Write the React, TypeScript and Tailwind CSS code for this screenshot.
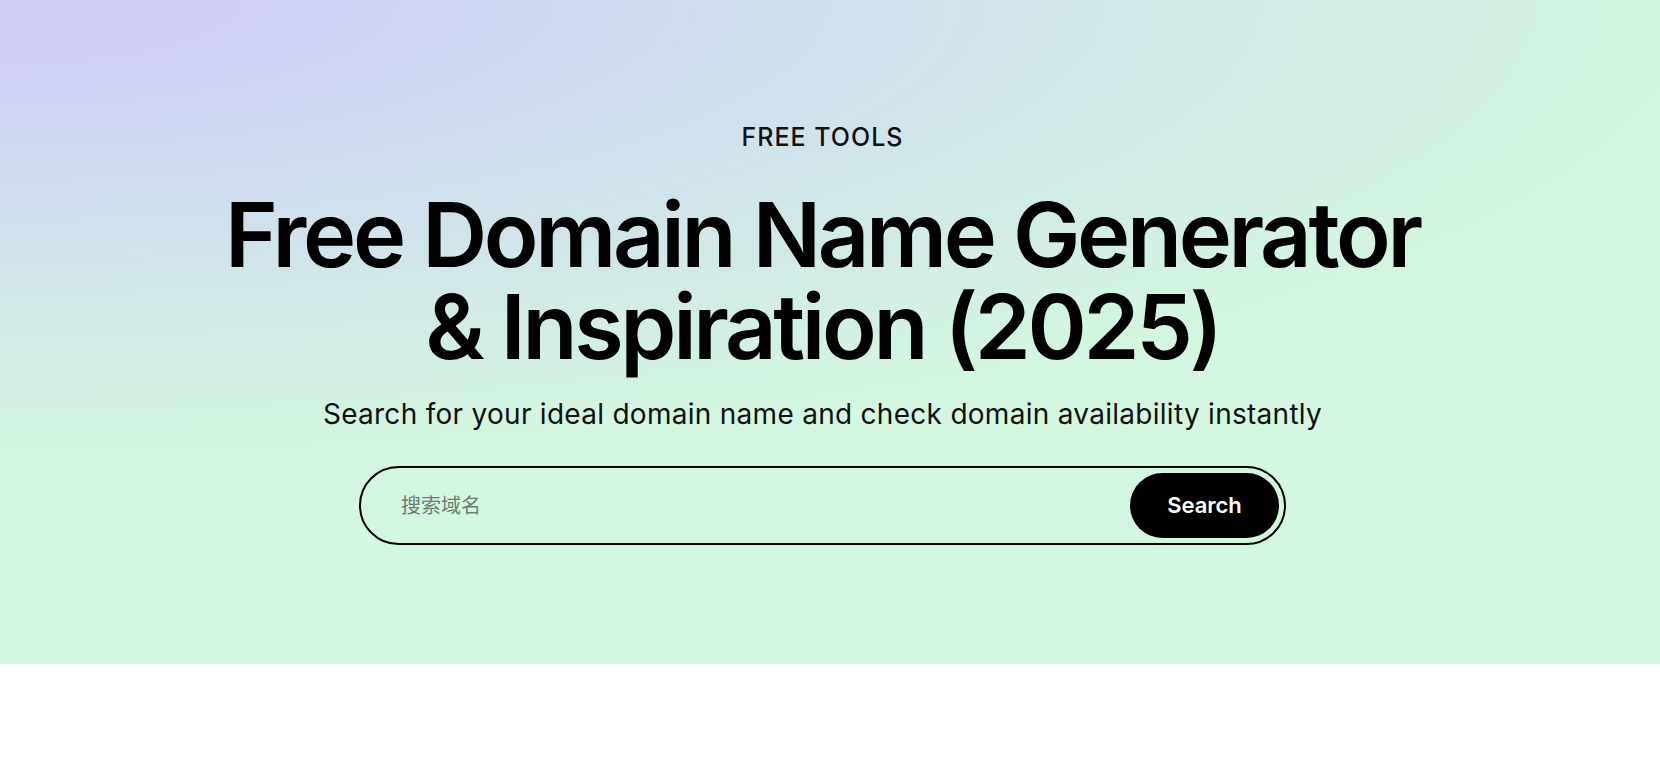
import React, { useState } from 'react';

const App: React.FC = () => {
  const [query, setQuery] = useState('');

  return (
    <div className="min-h-screen bg-white font-['Inter','Noto_Sans_CJK_SC',sans-serif] text-black">
      {/* Hero */}
      <section className="bg-[radial-gradient(1724px_460px_at_0%_0%,#cfcff5_12%,#d3f7e0_100%)] pt-[122px] pb-[119px] pr-[15px]">
        <div className="flex flex-col items-center text-center">
          <p className="text-[25px] leading-[30px] font-medium tracking-[0.04em] text-[#111]">FREE TOOLS</p>
          <h1 className="mt-[37px] text-[90px] leading-[92px] font-semibold tracking-[-0.037em]">
            Free Domain Name Generator
            <br />
            &amp; Inspiration (2025)
          </h1>
          <p className="mt-[23px] text-[28px] leading-[36px] tracking-[0.01em] text-[#111]">
            Search for your ideal domain name and check domain availability instantly
          </p>

          <form
            className="mt-[34px] flex h-[79px] w-[927px] items-center rounded-full border-2 border-black p-[5px]"
            onSubmit={(e) => e.preventDefault()}
          >
            <input
              value={query}
              onChange={(e) => setQuery(e.target.value)}
              placeholder="搜索域名"
              className="h-full flex-1 bg-transparent pl-[35px] text-[20px] outline-none placeholder:text-[#6f7c74] font-['Inter','Noto_Sans_CJK_SC',sans-serif]"
            />
            <button
              type="submit"
              className="h-[65px] w-[149px] rounded-full bg-black text-[22px] font-semibold text-white"
            >
              Search
            </button>
          </form>
        </div>
      </section>
    </div>
  );
};

export default App;
